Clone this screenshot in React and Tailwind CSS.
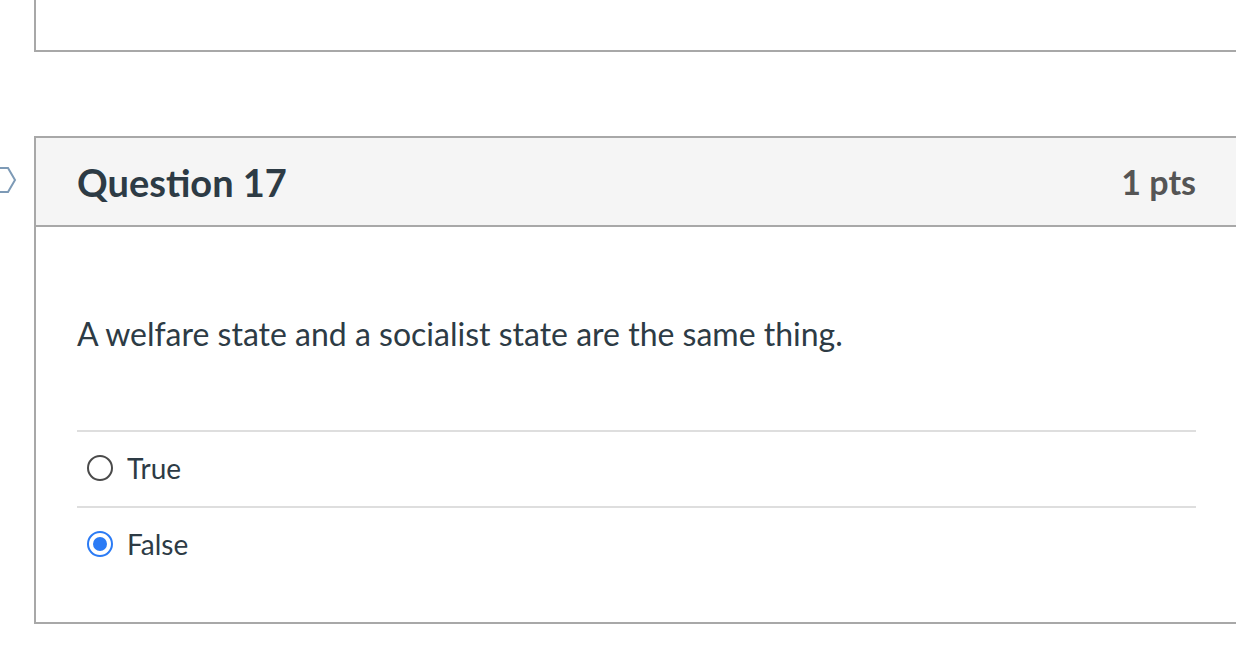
import React, { useState } from 'react';

const answers = ['True', 'False'];

const Radio = ({ checked }) => (
  <span
    className={`flex h-[26px] w-[26px] shrink-0 items-center justify-center rounded-full border-2 bg-white ${
      checked ? 'border-[#2b7bf5]' : 'border-[#4a4a4a]'
    }`}
  >
    {checked && <span className="h-[14px] w-[14px] rounded-full bg-[#2b7bf5]"></span>}
  </span>
);

const App = () => {
  const [selected, setSelected] = useState('False');

  return (
    <div className="relative h-[670px] w-[1236px] overflow-hidden bg-white font-['Lato','Liberation_Sans',sans-serif] text-[#2d3b45]">
      {/* flag marker, cut off at the left edge */}
      <svg className="absolute left-0 top-[166px]" width="18" height="28" viewBox="0 0 18 28">
        <path d="M-10 2 H8 L15 14 L8 26 H-10" fill="none" stroke="#7d9ab6" strokeWidth="2" />
      </svg>

      {/* previous question, only its bottom edge shows */}
      <div className="ml-[34px] h-[52px] w-[1205px] border-b-2 border-l-2 border-[#a8a8a8]"></div>

      {/* Question 17 */}
      <div className="ml-[34px] mt-[84px] w-[1205px] border-2 border-[#a8a8a8]">
        <div className="flex h-[89px] items-center justify-between border-b-2 border-[#a8a8a8] bg-[#f5f5f5] px-[41px]">
          <h2 className="text-[38px] font-bold leading-none">Question 17</h2>
          <span className="text-[34px] font-bold leading-none text-[#555]">1 pts</span>
        </div>

        <div className="px-[41px] pb-[40px] pt-[86px]">
          <p className="text-[32px] leading-[42px]">A welfare state and a socialist state are the same thing.</p>

          <div className="mt-[75px]">
            {answers.map((a) => (
              <label
                key={a}
                onClick={() => setSelected(a)}
                className="flex h-[76px] cursor-pointer items-center gap-[14px] border-t-2 border-[#dedede] pb-[3px] pl-[10px]"
              >
                <Radio checked={selected === a} />
                <span className="text-[28px]">{a}</span>
              </label>
            ))}
          </div>
        </div>
      </div>
    </div>
  );
};

export default App;
